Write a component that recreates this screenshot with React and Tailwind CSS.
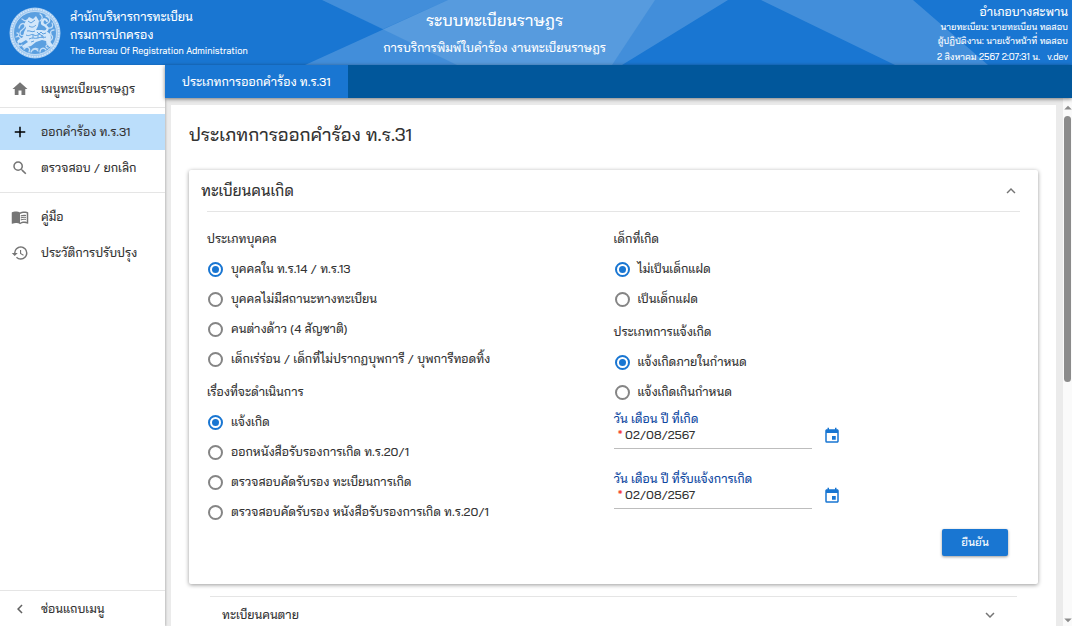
import React, { useState } from "react";
import {
  MdHome,
  MdAdd,
  MdSearch,
  MdMenuBook,
  MdHistory,
  MdChevronLeft,
  MdExpandLess,
  MdExpandMore,
  MdEvent,
  MdArrowDropUp,
  MdArrowDropDown,
} from "react-icons/md";

function Seal() {
  return (
    <svg viewBox="0 0 52 52" className="size-[52px] shrink-0" aria-hidden="true">
      <circle cx="26" cy="26" r="25.5" fill="#a3caf0" />
      <circle cx="26" cy="26" r="23.8" fill="none" stroke="#d3e7fa" strokeWidth="1.6" strokeDasharray="1.6 1" />
      <circle cx="26" cy="26" r="21.5" fill="#5a9fe0" stroke="#cfe4f8" strokeWidth="0.8" />
      <g fill="none" stroke="#c4def7" strokeWidth="1.3" strokeLinecap="round">
        <path d="M10 21c1-5 6-6 6-2s-5 3-5 7 5 3 5 0M37 9c4 1 5 5 2 7s-4 4 0 5 6-2 4-5M7 30c4-2 6 2 3 5s1 5 3 3M41 27c4 2 3 6-1 7s-2 5 2 3M15 42c3-4 7-1 5 3M31 45c0-4 4-5 6-2M31 7c3 2 3 5 0 7M45 23c-3 0-4 2-3 4M13 12c2 1 3 3 5 1M22 45c1-3 5-4 7-1M8 26c2 0 2 2 1 3M35 12c-2 3-1 5 1 6M24 42c2-1 3-1 5 0M39 41c-2 0-3-2-1-3" />
      </g>
      <path d="M32 24c4 2 8-1 6-4s-6-1-5-5 4-3 5-1" fill="none" stroke="#d3e7fa" strokeWidth="2" strokeLinecap="round" />
      <path d="M17 14l3-4 4 2 3-3 3 5-1 5-2 4c5 0 11 0 14 4 2 3 0 6 1 9l3 3-5 1-3-6-4-1-6 2-5 4-8 2-1-2 6-4-2-2-5 3-4-1 1-2 5-3 1-5 2-4-2-4z" fill="#d3e7fa" />
      <g fill="none" stroke="#5198dd" strokeWidth="0.9">
        <path d="M19 14l3 2 4-3M20 19c3 2 5 1 7-1M18 24c3-1 5 2 8 0M17 28c4 2 5-2 8 0s4-2 7 0 3 3 5 2M28 25l2 2 2-2 2 2 3-1M20 32c3-2 6 0 9-1s4-1 6 0M22 35l3-1M29 28v3M33 28v3M24 28v3" />
      </g>
    </svg>
  );
}

function HeaderShapes() {
  return (
    <svg viewBox="0 0 1072 65" preserveAspectRatio="none" className="absolute inset-0 size-full" aria-hidden="true">
      <g fill="#ffffff">
        <path d="M322 0H655L612 65H457Z" fillOpacity="0.11" />
        <path d="M448 0H728L622 65H305Z" fillOpacity="0.18" />
        <path d="M322 0H448L383 29Z" fillOpacity="0.08" />
        <path d="M761 0H913L988 65H895Z" fillOpacity="0.18" />
      </g>
    </svg>
  );
}

function NavItem({ icon: Icon, label, active }) {
  return (
    <a
      href="#"
      className={
        "flex h-9 items-center gap-3 pl-[11px] " + (active ? "bg-[#bbdefb] text-black" : "text-[#757575]")
      }
    >
      <Icon className="size-[18px] shrink-0" />
      <span className="whitespace-nowrap text-[#333333]">{label}</span>
    </a>
  );
}

function RadioGroup({ name, legend, options }) {
  const [value, setValue] = useState(options[0]);
  return (
    <fieldset>
      <legend className="h-[18px] leading-[18px]">{legend}</legend>
      <div className="pt-1.5">
        {options.map((o) => (
          <label key={o} className="flex h-[30px] items-center gap-2 pl-px">
            <input
              type="radio"
              name={name}
              checked={value === o}
              onChange={() => setValue(o)}
              className="size-[15px] shrink-0 appearance-none rounded-full border-2 border-[#858585] bg-white bg-clip-content p-[2px] checked:border-[#1976d2] checked:bg-[#1976d2]"
            />
            <span className="whitespace-nowrap">{o}</span>
          </label>
        ))}
      </div>
    </fieldset>
  );
}

function DateField({ id, label }) {
  return (
    <div className="flex h-[60px] items-start">
      <div className="w-[198px]">
        <label htmlFor={id} className="block h-4 leading-4 whitespace-nowrap text-[#0d47a1]">
          {label}
        </label>
        <div className="flex h-[22px] items-start border-b border-[#bdbdbd]">
          <span className="w-3 pl-1 leading-4 text-[#f44336]">*</span>
          <input id={id} defaultValue="02/08/2567" className="h-4 w-full min-w-0 bg-transparent leading-4 outline-none" />
        </div>
      </div>
      <button type="button" aria-label={label} className="mt-4 ml-[11px] text-[#1976d2]">
        <MdEvent className="size-[18px]" />
      </button>
    </div>
  );
}

export default function App() {
  return (
    <div className="flex h-screen flex-col overflow-hidden bg-[#ebebeb] font-['Bai_Jamjuree','Noto_Sans_Thai','Noto_Sans',sans-serif] text-[12px] text-[#333333]">
      <header className="relative flex h-[65px] shrink-0 bg-[#1976d2] font-medium text-white">
        <HeaderShapes />
        <div className="relative flex flex-[17] items-center gap-[9px] pl-[9px]">
          <Seal />
          <div className="whitespace-nowrap">
            <div className="leading-[18px]">สำนักบริหารการทะเบียน</div>
            <div className="leading-[18px]">กรมการปกครอง</div>
            <div className="text-[9px] leading-[14px]">The Bureau Of Registration Administration</div>
          </div>
        </div>
        <div className="relative pt-2 text-center whitespace-nowrap">
          <h1 className="text-base leading-6">ระบบทะเบียนราษฎร</h1>
          <p className="pt-1.5 leading-5">การบริการพิมพ์ใบคำร้อง งานทะเบียนราษฎร</p>
        </div>
        <div className="relative flex-[21] pt-1 pr-1 text-right text-[9px] leading-[14px] whitespace-nowrap">
          <div className="text-[12px] leading-4">อำเภอบางสะพาน</div>
          <div>นายทะเบียน: นายทะเบียน ทดสอบ</div>
          <div>ผู้ปฏิบัติงาน: นายเจ้าหน้าที่ ทดสอบ</div>
          <div className="pt-0.5">2 สิงหาคม 2567 2:07:31 น.&nbsp;&nbsp; v.dev</div>
        </div>
      </header>
      <div className="flex min-h-0 flex-1">
        <aside className="z-10 flex w-[165px] shrink-0 flex-col bg-white font-medium shadow-[1px_0_2px_rgba(0,0,0,0.2)]">
          <nav className="flex-1">
            <div className="border-b border-[#e5e5e5] pt-[6px]">
              <NavItem icon={MdHome} label="เมนูทะเบียนราษฎร" />
            </div>
            <div className="border-b border-[#e5e5e5] py-1.5">
              <NavItem icon={MdAdd} label="ออกคำร้อง ท.ร.31" active />
              <NavItem icon={MdSearch} label="ตรวจสอบ / ยกเลิก" />
            </div>
            <div className="pt-1.5">
              <NavItem icon={MdMenuBook} label="คู่มือ" />
              <NavItem icon={MdHistory} label="ประวัติการปรับปรุง" />
            </div>
          </nav>
          <button type="button" className="flex h-9 items-center gap-3 border-t border-[#e5e5e5] pl-[11px]">
            <MdChevronLeft className="size-[18px] text-[#616161]" />
            ซ่อนแถบเมนู
          </button>
        </aside>
        <div className="flex min-w-0 flex-1 flex-col">
          <div className="z-10 flex h-[33px] shrink-0 bg-[#01579b] shadow-[0_1px_4px_rgba(0,0,0,0.5)]">
            <button type="button" className="bg-[#1976d2] px-[17px] pt-px font-medium whitespace-nowrap text-white">
              ประเภทการออกคำร้อง ท.ร.31
            </button>
          </div>
          <div className="flex min-h-0 flex-1">
            <main className="min-w-0 flex-1 overflow-hidden pt-[7px] pr-[7px] pl-[6px]">
              <div className="bg-white px-[18px] pt-[18px]">
                <h2 className="text-lg leading-6 font-medium">ประเภทการออกคำร้อง ท.ร.31</h2>
                <section className="mt-[23px] h-[414px] rounded-xs bg-white px-[18px] shadow-[0_1px_4px_rgba(0,0,0,0.4)]">
                  <div className="-ml-1.5 flex h-[41px] items-center justify-between pt-px">
                    <h3 className="text-[15px] font-medium">ทะเบียนคนเกิด</h3>
                    <button type="button" aria-label="ทะเบียนคนเกิด" className="text-[#757575]">
                      <MdExpandLess className="size-[18px]" />
                    </button>
                  </div>
                  <form className="border-t border-[#e5e5e5] pt-[18px] font-medium">
                    <div className="grid grid-cols-2">
                      <div className="flex flex-col gap-[9px]">
                        <RadioGroup
                          name="person"
                          legend="ประเภทบุคคล"
                          options={[
                            "บุคคลใน ท.ร.14 / ท.ร.13",
                            "บุคคลไม่มีสถานะทางทะเบียน",
                            "คนต่างด้าว (4 สัญชาติ)",
                            "เด็กเร่ร่อน / เด็กที่ไม่ปรากฏบุพการี / บุพการีทอดทิ้ง",
                          ]}
                        />
                        <RadioGroup
                          name="subject"
                          legend="เรื่องที่จะดำเนินการ"
                          options={[
                            "แจ้งเกิด",
                            "ออกหนังสือรับรองการเกิด ท.ร.20/1",
                            "ตรวจสอบคัดรับรอง ทะเบียนการเกิด",
                            "ตรวจสอบคัดรับรอง หนังสือรับรองการเกิด ท.ร.20/1",
                          ]}
                        />
                      </div>
                      <div>
                        <div className="flex flex-col gap-[9px]">
                          <RadioGroup name="twin" legend="เด็กที่เกิด" options={["ไม่เป็นเด็กแฝด", "เป็นเด็กแฝด"]} />
                          <RadioGroup
                            name="notice"
                            legend="ประเภทการแจ้งเกิด"
                            options={["แจ้งเกิดภายในกำหนด", "แจ้งเกิดเกินกำหนด"]}
                          />
                        </div>
                        <div className="pt-1">
                          <DateField id="born" label="วัน เดือน ปี ที่เกิด" />
                          <DateField id="notified" label="วัน เดือน ปี ที่รับแจ้งการเกิด" />
                        </div>
                      </div>
                    </div>
                    <div className="-mt-0.5 flex justify-end pr-3">
                      <button
                        type="button"
                        className="h-[27px] w-[66px] rounded-xs bg-[#1976d2] text-[11px] text-white shadow-[0_1px_3px_rgba(0,0,0,0.4)]"
                      >
                        ยืนยัน
                      </button>
                    </div>
                  </form>
                </section>
                <section className="mx-[21px] mt-3 flex h-9 items-center justify-between border-t border-[#e5e5e5] pr-[18px] pl-3">
                  <h3 className="text-[12px] font-medium">ทะเบียนคนตาย</h3>
                  <button type="button" aria-label="ทะเบียนคนตาย" className="text-[#757575]">
                    <MdExpandMore className="size-[18px]" />
                  </button>
                </section>
              </div>
            </main>
            <div className="flex w-[9px] shrink-0 flex-col items-center bg-[#fafafa] pt-1 text-[#8b8b8b]" aria-hidden="true">
              <MdArrowDropUp className="size-3 shrink-0 scale-150" />
              <div className="mt-0.5 h-[266px] w-[7px] rounded-full bg-[#8b8b8b]" />
              <MdArrowDropDown className="mt-auto size-3 shrink-0 scale-150" />
            </div>
          </div>
        </div>
      </div>
    </div>
  );
}
